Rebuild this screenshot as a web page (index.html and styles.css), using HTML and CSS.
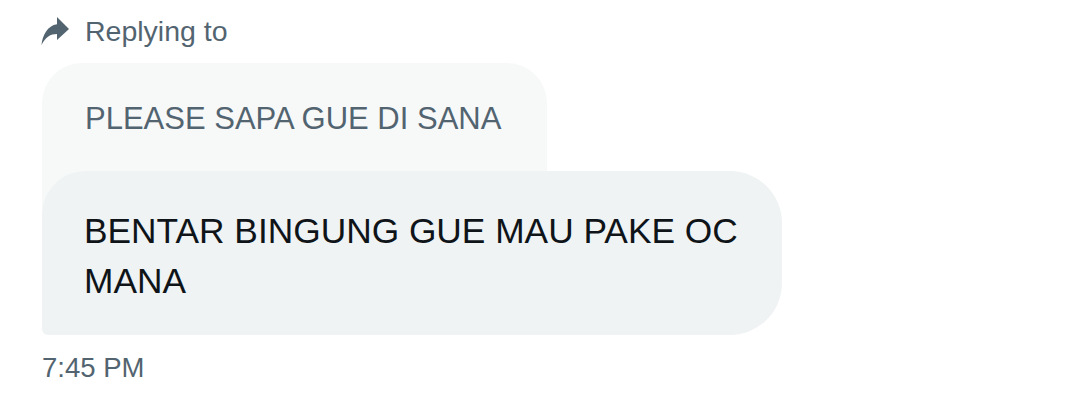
FILE: index.html
```html
<!DOCTYPE html>
<html>
<head>
<meta charset="utf-8">
<link rel="stylesheet" href="styles.css">
</head>
<body>
<div class="thread">
  <div class="replying">
    <svg class="reply-icon" viewBox="0 0 28 28" aria-hidden="true"><path d="M16 0L28 12 16 23V17C9.5 17 4.5 20 0.5 28 1.5 18 6.5 8.5 16 7.2Z"/></svg>
    <span class="replying-label">Replying to</span>
  </div>
  <div class="quote">PLEASE SAPA GUE DI SANA</div>
  <div class="bubble">BENTAR BINGUNG GUE MAU PAKE OC MANA</div>
  <div class="time">7:45 PM</div>
</div>
</body>
</html>
```

FILE: styles.css
```css
html, body {
  margin: 0;
  background: #ffffff;
}
body {
  font-family: "Liberation Sans", Arial, sans-serif;
}
.thread {
  padding: 13px 0 0 42px;
  display: flex;
  flex-direction: column;
  align-items: flex-start;
}
.replying {
  display: flex;
  align-items: center;
  gap: 16px;
  height: 36px;
  color: #536471;
  font-size: 28.5px;
}
.reply-icon {
  width: 28px;
  height: 28px;
  fill: #536471;
  margin-left: -1px;
  margin-top: 0;
}
.quote {
  box-sizing: border-box;
  width: 505px;
  margin-top: 14px;
  padding: 38px 20px 74px 43px;
  background: #f7f9f9;
  border-radius: 40px 40px 0 0;
  color: #536471;
  font-size: 31px;
  line-height: 36px;
}
.bubble {
  position: relative;
  box-sizing: border-box;
  width: 740px;
  margin-top: -40px;
  padding: 35px 30px 29px 42px;
  background: #eff3f4;
  border-radius: 44px 52px 52px 6px;
  color: #0f1419;
  font-size: 35.3px;
  line-height: 50px;
}
.time {
  margin-top: 15px;
  color: #536471;
  font-size: 27.5px;
  line-height: 36px;
}
```
